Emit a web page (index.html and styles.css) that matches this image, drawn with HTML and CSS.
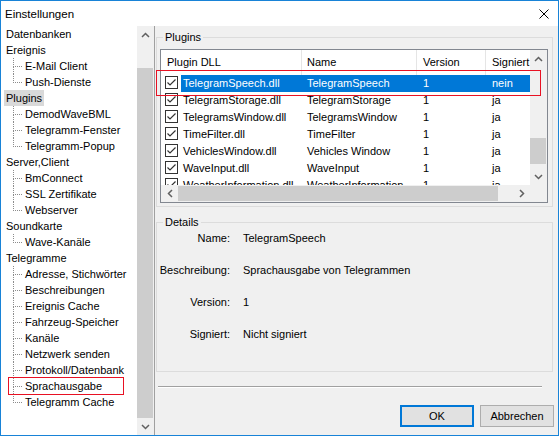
FILE: index.html
```html
<!DOCTYPE html>
<html lang="de">
<head>
<meta charset="utf-8">
<title>Einstellungen</title>
<link rel="stylesheet" href="styles.css">
</head>
<body>
<div class="window">
  <header class="titlebar">
    <span class="title">Einstellungen</span>
    <span class="close"><svg width="10" height="10" viewBox="0 0 10 10"><path d="M0.5 0.5 L9.5 9.5 M9.5 0.5 L0.5 9.5" stroke="#000" stroke-width="1" fill="none"/></svg></span>
  </header>
  <div class="body">
    <nav class="tree">
      <ul class="tree-list">
        <li class="row"><span class="node">Datenbanken</span></li>
        <li class="row"><span class="node">Ereignis</span></li>
        <li class="row child"><span class="branch"><span class="b-up"></span><span class="b-down"></span></span><span class="node">E-Mail Client</span></li>
        <li class="row child last"><span class="branch"><span class="b-up"></span><span class="b-down"></span></span><span class="node">Push-Dienste</span></li>
        <li class="row"><span class="node selected">Plugins</span></li>
        <li class="row child"><span class="branch"><span class="b-up"></span><span class="b-down"></span></span><span class="node">DemodWaveBML</span></li>
        <li class="row child"><span class="branch"><span class="b-up"></span><span class="b-down"></span></span><span class="node">Telegramm-Fenster</span></li>
        <li class="row child last"><span class="branch"><span class="b-up"></span><span class="b-down"></span></span><span class="node">Telegramm-Popup</span></li>
        <li class="row"><span class="node">Server,Client</span></li>
        <li class="row child"><span class="branch"><span class="b-up"></span><span class="b-down"></span></span><span class="node">BmConnect</span></li>
        <li class="row child"><span class="branch"><span class="b-up"></span><span class="b-down"></span></span><span class="node">SSL Zertifikate</span></li>
        <li class="row child last"><span class="branch"><span class="b-up"></span><span class="b-down"></span></span><span class="node">Webserver</span></li>
        <li class="row"><span class="node">Soundkarte</span></li>
        <li class="row child last"><span class="branch"><span class="b-up"></span><span class="b-down"></span></span><span class="node">Wave-Kanäle</span></li>
        <li class="row"><span class="node">Telegramme</span></li>
        <li class="row child"><span class="branch"><span class="b-up"></span><span class="b-down"></span></span><span class="node">Adresse, Stichwörter</span></li>
        <li class="row child"><span class="branch"><span class="b-up"></span><span class="b-down"></span></span><span class="node">Beschreibungen</span></li>
        <li class="row child"><span class="branch"><span class="b-up"></span><span class="b-down"></span></span><span class="node">Ereignis Cache</span></li>
        <li class="row child"><span class="branch"><span class="b-up"></span><span class="b-down"></span></span><span class="node">Fahrzeug-Speicher</span></li>
        <li class="row child"><span class="branch"><span class="b-up"></span><span class="b-down"></span></span><span class="node">Kanäle</span></li>
        <li class="row child"><span class="branch"><span class="b-up"></span><span class="b-down"></span></span><span class="node">Netzwerk senden</span></li>
        <li class="row child"><span class="branch"><span class="b-up"></span><span class="b-down"></span></span><span class="node">Protokoll/Datenbank</span></li>
        <li class="row child"><span class="branch"><span class="b-up"></span><span class="b-down"></span></span><span class="node">Sprachausgabe</span></li>
        <li class="row child last"><span class="branch"><span class="b-up"></span><span class="b-down"></span></span><span class="node">Telegramm Cache</span></li>
      </ul>
    </nav>
    <div class="vscroll tree-scroll">
      <div class="sb-btn"><svg width="9" height="6" viewBox="0 0 9 6"><path d="M1 5 L4.5 1.5 L8 5" fill="none" stroke="#606060" stroke-width="1.5"/></svg></div>
      <div class="sb-track"><div class="thumb tree-thumb"></div></div>
      <div class="sb-btn"><svg width="9" height="6" viewBox="0 0 9 6"><path d="M1 1 L4.5 4.5 L8 1" fill="none" stroke="#606060" stroke-width="1.5"/></svg></div>
    </div>
    <div class="splitter"></div>
    <main class="panel">
      <section class="group plugins">
        <div class="group-title">Plugins</div>
        <div class="listview">
          <div class="lv-content">
            <div class="lv-head">
              <span class="h-a">Plugin DLL</span>
              <span class="h-b">Name</span>
              <span class="h-c">Version</span>
              <span class="h-d">Signiert</span>
            </div>
            <div class="lv-row selected">
              <span class="chk-cell"><svg class="cb" width="13" height="13" viewBox="0 0 13 13"><rect x="0.5" y="0.5" width="12" height="12" fill="#fff" stroke="#333"/><path d="M2.5 6.5 L5 9 L10.5 3.5" fill="none" stroke="#333" stroke-width="1.2"/></svg></span>
              <span class="sel"><span class="c-a">TelegramSpeech.dll</span><span class="c-b">TelegramSpeech</span><span class="c-c">1</span><span class="c-d">nein</span></span>
            </div>
            <div class="lv-row">
              <span class="chk-cell"><svg class="cb" width="13" height="13" viewBox="0 0 13 13"><rect x="0.5" y="0.5" width="12" height="12" fill="#fff" stroke="#333"/><path d="M2.5 6.5 L5 9 L10.5 3.5" fill="none" stroke="#333" stroke-width="1.2"/></svg></span>
              <span class="sel"><span class="c-a">TelegramStorage.dll</span><span class="c-b">TelegramStorage</span><span class="c-c">1</span><span class="c-d">ja</span></span>
            </div>
            <div class="lv-row">
              <span class="chk-cell"><svg class="cb" width="13" height="13" viewBox="0 0 13 13"><rect x="0.5" y="0.5" width="12" height="12" fill="#fff" stroke="#333"/><path d="M2.5 6.5 L5 9 L10.5 3.5" fill="none" stroke="#333" stroke-width="1.2"/></svg></span>
              <span class="sel"><span class="c-a">TelegramsWindow.dll</span><span class="c-b">TelegramsWindow</span><span class="c-c">1</span><span class="c-d">ja</span></span>
            </div>
            <div class="lv-row">
              <span class="chk-cell"><svg class="cb" width="13" height="13" viewBox="0 0 13 13"><rect x="0.5" y="0.5" width="12" height="12" fill="#fff" stroke="#333"/><path d="M2.5 6.5 L5 9 L10.5 3.5" fill="none" stroke="#333" stroke-width="1.2"/></svg></span>
              <span class="sel"><span class="c-a">TimeFilter.dll</span><span class="c-b">TimeFilter</span><span class="c-c">1</span><span class="c-d">ja</span></span>
            </div>
            <div class="lv-row">
              <span class="chk-cell"><svg class="cb" width="13" height="13" viewBox="0 0 13 13"><rect x="0.5" y="0.5" width="12" height="12" fill="#fff" stroke="#333"/><path d="M2.5 6.5 L5 9 L10.5 3.5" fill="none" stroke="#333" stroke-width="1.2"/></svg></span>
              <span class="sel"><span class="c-a">VehiclesWindow.dll</span><span class="c-b">Vehicles Window</span><span class="c-c">1</span><span class="c-d">ja</span></span>
            </div>
            <div class="lv-row">
              <span class="chk-cell"><svg class="cb" width="13" height="13" viewBox="0 0 13 13"><rect x="0.5" y="0.5" width="12" height="12" fill="#fff" stroke="#333"/><path d="M2.5 6.5 L5 9 L10.5 3.5" fill="none" stroke="#333" stroke-width="1.2"/></svg></span>
              <span class="sel"><span class="c-a">WaveInput.dll</span><span class="c-b">WaveInput</span><span class="c-c">1</span><span class="c-d">ja</span></span>
            </div>
            <div class="lv-row">
              <span class="chk-cell"><svg class="cb" width="13" height="13" viewBox="0 0 13 13"><rect x="0.5" y="0.5" width="12" height="12" fill="#fff" stroke="#333"/><path d="M2.5 6.5 L5 9 L10.5 3.5" fill="none" stroke="#333" stroke-width="1.2"/></svg></span>
              <span class="sel"><span class="c-a">WeatherInformation.dll</span><span class="c-b">WeatherInformation</span><span class="c-c">1</span><span class="c-d">ja</span></span>
            </div>
          </div>
          <div class="vscroll lv-vscroll">
            <div class="sb-btn"><svg width="9" height="6" viewBox="0 0 9 6"><path d="M1 5 L4.5 1.5 L8 5" fill="none" stroke="#606060" stroke-width="1.5"/></svg></div>
            <div class="sb-track"><div class="thumb lv-vthumb"></div></div>
            <div class="sb-btn"><svg width="9" height="6" viewBox="0 0 9 6"><path d="M1 1 L4.5 4.5 L8 1" fill="none" stroke="#606060" stroke-width="1.5"/></svg></div>
          </div>
          <div class="hscroll">
            <div class="sb-btn"><svg width="6" height="9" viewBox="0 0 6 9"><path d="M5 1 L1.5 4.5 L5 8" fill="none" stroke="#606060" stroke-width="1.5"/></svg></div>
            <div class="sb-track h-track"><div class="thumb lv-hthumb"></div></div>
            <div class="sb-btn"><svg width="6" height="9" viewBox="0 0 6 9"><path d="M1 1 L4.5 4.5 L1 8" fill="none" stroke="#606060" stroke-width="1.5"/></svg></div>
          </div>
          <div class="corner"></div>
        </div>
      </section>
      <section class="group details">
        <div class="group-title">Details</div>
        <dl class="details-grid">
          <dt>Name:</dt><dd>TelegramSpeech</dd>
          <dt>Beschreibung:</dt><dd>Sprachausgabe von Telegrammen</dd>
          <dt>Version:</dt><dd>1</dd>
          <dt>Signiert:</dt><dd>Nicht signiert</dd>
        </dl>
      </section>
      <hr class="sep">
      <div class="buttons">
        <button class="btn default">OK</button>
        <button class="btn">Abbrechen</button>
      </div>
    </main>
  </div>
  <div class="mark mark-row"></div>
  <div class="mark mark-tree"></div>
</div>
</body>
</html>
```

FILE: styles.css
```css
html, body {
  margin: 0;
  padding: 0;
  background: #fff;
}
body {
  font-family: "Liberation Sans", Arial, sans-serif;
  font-size: 11px;
  color: #000;
}
.window {
  position: relative;
  width: 559px;
  height: 436px;
  box-sizing: border-box;
  border: 1px solid #1883d7;
  background: #f0f0f0;
  display: flex;
  flex-direction: column;
  overflow: hidden;
}
.titlebar {
  height: 25px;
  flex: none;
  background: #fff;
  display: flex;
  align-items: center;
  padding: 0 9px 0 4px;
}
.title {
  font-size: 11.5px;
}
.close {
  margin-left: auto;
  width: 10px;
  height: 10px;
  display: flex;
}
.body {
  flex: 1;
  display: flex;
  min-height: 0;
}

/* tree */
.tree {
  width: 136px;
  flex: none;
  background: #fff;
  overflow: hidden;
}
.tree-list {
  list-style: none;
  margin: 0;
  padding: 0;
}
.row {
  height: 16px;
  line-height: 16px;
  display: flex;
  white-space: nowrap;
}
.node {
  margin-left: 3px;
  padding: 0 2px;
}
.node.selected {
  background: #d9d9d9;
}
.branch {
  display: flex;
  flex-direction: column;
  width: 9px;
  margin-left: 12px;
  flex: none;
}
.child .node {
  margin-left: 1px;
}
.b-up {
  height: 9px;
  box-sizing: border-box;
  border-left: 1px dotted #8c8c8c;
  border-bottom: 1px dotted #8c8c8c;
}
.b-down {
  flex: 1;
  border-left: 1px dotted #8c8c8c;
}
.last .b-down {
  border-left-color: transparent;
}

/* scrollbars */
.vscroll {
  display: flex;
  flex-direction: column;
  background: #f0f0f0;
}
.sb-btn {
  height: 17px;
  flex: none;
  display: flex;
  align-items: center;
  justify-content: center;
}
.sb-track {
  flex: 1;
  display: flex;
  flex-direction: column;
}
.thumb {
  background: #cdcdcd;
}
.tree-scroll {
  width: 17px;
  flex: none;
}
.tree-thumb {
  margin: 25px 1px 0 0;
  height: 350px;
}
.splitter {
  width: 1px;
  flex: none;
  background: #a0a0a0;
}

/* right panel */
.panel {
  flex: 1;
  display: flex;
  flex-direction: column;
  padding: 0 5px 0 1px;
}
.group {
  box-sizing: border-box;
  border: 1px solid #dcdcdc;
  display: flex;
  flex-direction: column;
  flex: none;
}
.group-title {
  align-self: flex-start;
  margin: -7px 0 0 6px;
  padding: 0 2px;
  line-height: 13px;
  background: #f0f0f0;
}
.plugins {
  margin-top: 11px;
  height: 170px;
}
.listview {
  margin: 5px 4px 0 3px;
  height: 154px;
  box-sizing: border-box;
  border: 1px solid #828790;
  background: #fff;
  display: grid;
  grid-template-columns: 1fr 17px;
  grid-template-rows: 1fr 17px;
}
.lv-content {
  overflow: hidden;
  min-width: 0;
}
.lv-head {
  display: flex;
  height: 25px;
  line-height: 25px;
  white-space: nowrap;
}
.lv-head span {
  box-sizing: border-box;
  border-right: 1px solid #e5e5e5;
}
.h-a { width: 141px; padding-left: 6px; }
.h-b { width: 115px; padding-left: 5px; }
.h-c { width: 69px; padding-left: 6px; }
.lv-head .h-d { flex: 1; padding-left: 6px; border-right: none; }

.lv-row {
  display: flex;
  height: 17px;
  line-height: 17px;
  white-space: nowrap;
}
.chk-cell {
  width: 20px;
  flex: none;
  box-sizing: border-box;
  padding: 1px 0 0 4px;
  display: flex;
  align-items: flex-start;
}
.cb {
  display: block;
}
.sel {
  flex: 1;
  display: flex;
  min-width: 0;
}
.lv-row.selected .sel {
  background: #0078d7;
  color: #fff;
}
.sel span {
  box-sizing: border-box;
  overflow: hidden;
}
.c-a { width: 121px; padding-left: 2px; flex: none; }
.c-b { width: 115px; padding-left: 5px; flex: none; }
.c-c { width: 69px; padding-left: 6px; flex: none; }
.c-d { flex: 1; padding-left: 6px; }

.lv-vscroll {
  grid-column: 2;
  grid-row: 1;
}
.lv-vthumb {
  margin: 71px 1px 0 0;
  height: 26px;
}
.hscroll {
  grid-column: 1;
  grid-row: 2;
  display: flex;
  background: #f0f0f0;
}
.hscroll .sb-btn {
  width: 17px;
  height: auto;
}
.h-track {
  flex-direction: row;
}
.lv-hthumb {
  width: 320px;
  margin: 1px 0;
}
.corner {
  grid-column: 2;
  grid-row: 2;
  background: #f0f0f0;
}

/* details */
.details {
  margin-top: 15px;
  height: 150px;
}
.details-grid {
  display: grid;
  grid-template-columns: 73px 1fr;
  column-gap: 13px;
  row-gap: 16px;
  margin: 1px 0 0 0;
  line-height: 16px;
}
.details-grid dt {
  text-align: right;
  white-space: nowrap;
}
.details-grid dd {
  margin: 0;
  white-space: nowrap;
}

.sep {
  margin: 14px 0 0 2px;
  width: 384px;
  height: 0;
  border: none;
  border-top: 1px solid #a0a0a0;
  border-bottom: 1px solid #fff;
}
.buttons {
  margin: 17px -1px 0 0;
  display: flex;
  justify-content: flex-end;
  gap: 6px;
}
.btn {
  width: 74px;
  height: 22px;
  box-sizing: border-box;
  border: 1px solid #adadad;
  background: #e1e1e1;
  font: inherit;
  color: #000;
  padding: 0;
}
.btn.default {
  border: 2px solid #0078d7;
}

/* annotation marks */
.mark {
  position: absolute;
  box-sizing: border-box;
  border: 1px solid #e81123;
  pointer-events: none;
}
.mark-row {
  left: 155px;
  top: 69px;
  width: 385px;
  height: 26px;
}
.mark-tree {
  left: 7px;
  top: 376px;
  width: 116px;
  height: 18px;
}
```
